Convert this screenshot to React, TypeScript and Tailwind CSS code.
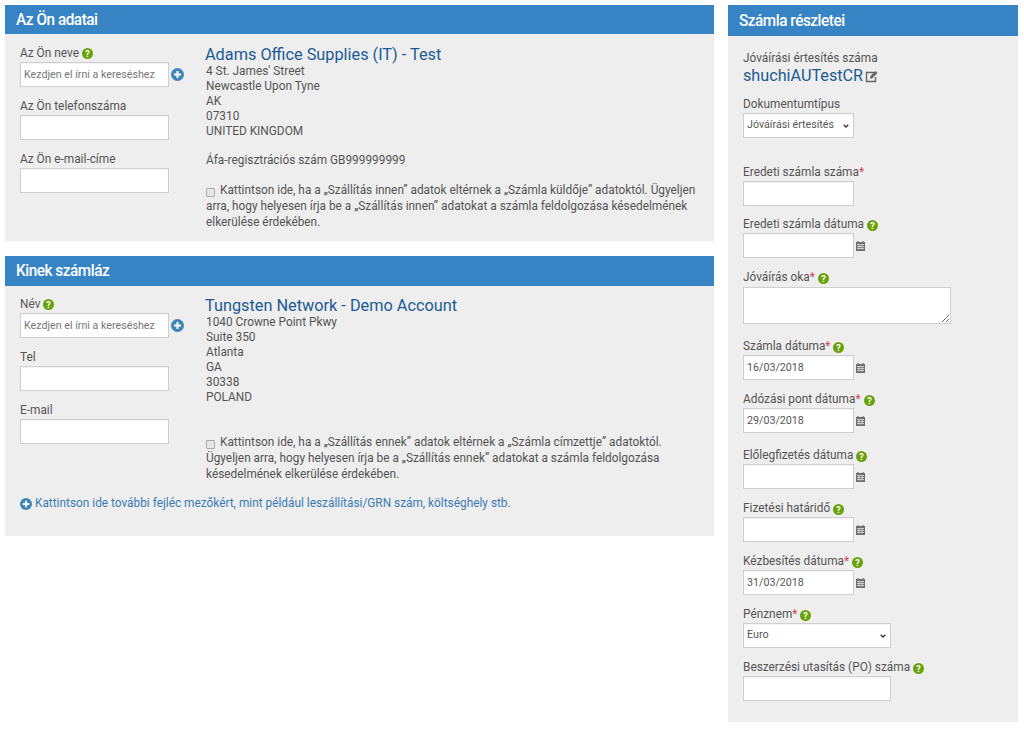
import React from "react";

const Help = ({ className = "" }: { className?: string }) => (
  <svg width="11" height="11" viewBox="0 0 11 11" className={`inline-block shrink-0 ${className}`}>
    <circle cx="5.5" cy="5.5" r="5.5" fill="#6aa20c" />
    <text x="5.5" y="8.800" textAnchor="middle" fontSize="9" fontWeight="700" fill="#fff" fontFamily="Roboto, sans-serif">?</text>
  </svg>
);

const Plus = ({ className = "" }: { className?: string }) => (
  <svg width="13" height="13" viewBox="0 0 13 13" className={`shrink-0 ${className}`}>
    <circle cx="6.500" cy="6.500" r="6.500" fill="#3f86b8" />
    <path d="M6.500 3v7M3 6.500h7" stroke="#fff" strokeWidth="2" />
  </svg>
);

const Cal = () => (
  <svg width="9" height="10" viewBox="0 0 9 10" className="shrink-0">
    <path d="M0 1h9v9H0z" fill="#707070" />
    <path d="M1 3.500h7M1 5.500h7M1 7.500h7M3 3.500v5M6 3.500v5" stroke="#ddd" strokeWidth=".8" />
    <path d="M2 0v2M7 0v2" stroke="#707070" strokeWidth="1.200" />
  </svg>
);

const Edit = () => (
  <svg width="13" height="13" viewBox="0 0 13 13" className="shrink-0 ml-[2px]">
    <path d="M9 2.500H1.500v9h9V7" fill="none" stroke="#666" strokeWidth="1.400" />
    <path d="M5 6.500 10.500 1l2 2L7 8.500H5z" fill="#666" />
  </svg>
);

const inputCls = "block h-[25px] bg-white border border-[#cfcfcf] shadow-[inset_0_1px_1px_rgba(0,0,0,0.05)] text-[10.7px] text-[#555] px-[3px] outline-none";

const Header = ({ children, h }: { children: React.ReactNode; h: string }) => (
  <div className={`${h} bg-[#3784c5] text-white text-[17px] font-medium pl-[11px] flex items-center tracking-[-0.5px]`}>
    <span className="origin-left scale-x-[0.9] whitespace-nowrap">{children}</span>
  </div>
);

const Star = () => <span className="text-[#d9434e]">*</span>;

const Check = () => (
  <input type="checkbox" readOnly className="appearance-none w-[9px] h-[9px] border border-[#aaa] bg-[#e6e6e6] rounded-[1px] mr-[5px] align-[-3px]" />
);

function Select({ value, w }: { value: string; w: string }) {
  return (
    <div className={`relative ${w}`}>
      <select className={`${inputCls} w-full appearance-none`} defaultValue={value}>
        <option value={value}>{value}</option>
      </select>
      <svg width="6" height="4" viewBox="0 0 6 4" className="absolute right-[5px] top-[11px]">
        <path d="M.7.7 3 3l2.300-2.300" fill="none" stroke="#333" strokeWidth="1.300" />
      </svg>
    </div>
  );
}

function LeftFields({ a, b, c }: { a: string; b: string; c: string }) {
  return (
    <div className="w-[200px] shrink-0 pl-[15px] leading-[15px]">
      <div className="h-[16px] flex items-center gap-[3px]">{a}<Help /></div>
      <div className="flex items-center mt-[1px]">
        <input readOnly placeholder="Kezdjen el írni a kereséshez" className={`${inputCls} w-[149px] placeholder:text-[#777]`} />
        <Plus className="ml-[2px]" />
      </div>
      <div className="mt-[11px] h-[16px] flex items-center">{b}</div>
      <input readOnly className={`${inputCls} w-[149px] mt-[1px]`} />
      <div className="mt-[11px] h-[16px] flex items-center">{c}</div>
      <input readOnly className={`${inputCls} w-[149px] mt-[1px]`} />
    </div>
  );
}

function Field({ label, star, help, value, cal, mt, w = "w-[111px]" }: { label: string; star?: boolean; help?: boolean; value?: string; cal?: boolean; mt: string; w?: string }) {
  return (
    <div className={mt}>
      <div className="h-[16px] flex items-center whitespace-nowrap">
        {label}{star && <Star />}{help && <Help className="ml-[3px]" />}
      </div>
      <div className="flex items-center gap-[2px]">
        <input readOnly value={value ?? ""} className={`${inputCls} ${w}`} />
        {cal && <Cal />}
      </div>
    </div>
  );
}

export default function App() {
  return (
    <div className="w-[1024px] h-[729px] bg-white flex items-start pt-[5px] pl-[5px] overflow-hidden font-['Roboto',sans-serif] text-[11.85px] text-[#555]">
      <div className="w-[709px] shrink-0">
        <Header h="h-[29px]">Az Ön adatai</Header>
        <section className="h-[207px] bg-[#eeeeee] flex pt-[11px]">
          <LeftFields a="Az Ön neve" b="Az Ön telefonszáma" c="Az Ön e-mail-címe" />
          <div className="w-[509px] pl-[1px] pr-[10px]">
            <h2 className="text-[16.3px] leading-[20px] text-[#1c5a94] ml-[-1px]">Adams Office Supplies (IT) - Test</h2>
            <div className="leading-[15px] mt-[-1px]">
              <div>4 St. James' Street</div>
              <div>Newcastle Upon Tyne</div>
              <div>AK</div>
              <div>07310</div>
              <div>UNITED KINGDOM</div>
              <div className="mt-[14px]">Áfa-regisztrációs szám GB999999999</div>
            </div>
            <p className="mt-[14px] leading-[16px]">
              <Check />
              Kattintson ide, ha a „Szállítás innen” adatok eltérnek a „Számla küldője” adatoktól. Ügyeljen arra, hogy helyesen írja be a „Szállítás innen” adatokat a számla feldolgozása késedelmének elkerülése érdekében.
            </p>
          </div>
        </section>
        <div className="h-[15px]" />
        <Header h="h-[30px]">Kinek számláz</Header>
        <section className="h-[250px] bg-[#eeeeee] pt-[10px]">
          <div className="flex">
            <LeftFields a="Név" b="Tel" c="E-mail" />
            <div className="w-[509px] pl-[1px] pr-[10px]">
              <h2 className="text-[16.3px] leading-[20px] text-[#1c5a94] ml-[-1px]">Tungsten Network - Demo Account</h2>
              <div className="leading-[15px] mt-[-1px]">
                <div>1040 Crowne Point Pkwy</div>
                <div>Suite 350</div>
                <div>Atlanta</div>
                <div>GA</div>
                <div>30338</div>
                <div>POLAND</div>
              </div>
              <p className="mt-[29px] leading-[16px]">
                <Check />
                Kattintson ide, ha a „Szállítás ennek” adatok eltérnek a „Számla címzettje” adatoktól. Ügyeljen arra, hogy helyesen írja be a „Szállítás ennek” adatokat a számla feldolgozása késedelmének elkerülése érdekében.
              </p>
            </div>
          </div>
          <div className="flex items-center gap-[3px] pl-[15px] mt-[13px] text-[#3b7bb3]">
            <Plus className="w-[12px] h-[12px]" />
            Kattintson ide további fejléc mezőkért, mint például leszállítási/GRN szám, költséghely stb.
          </div>
        </section>
      </div>
      <div className="w-[290px] ml-[14px] shrink-0">
        <Header h="h-[31px]">Számla részletei</Header>
        <aside className="h-[686px] bg-[#eeeeee] pl-[15px] pt-[15px]">
          <div className="h-[16px] flex items-center">Jóváírási értesítés száma</div>
          <div className="flex items-center h-[19px] text-[#1c5a94] text-[16.2px]">shuchiAUTestCR<Edit /></div>
          <div className="mt-[11px] h-[16px] flex items-center">Dokumentumtípus</div>
          <Select value="Jóváírási értesítés" w="w-[111px]" />
          <Field label="Eredeti számla száma" star mt="mt-[27px]" />
          <Field label="Eredeti számla dátuma" help cal mt="mt-[11px]" />
          <div className="mt-[12px]">
            <div className="h-[16px] flex items-center">Jóváírás oka<Star /><Help className="ml-[3px]" /></div>
            <textarea readOnly className="block w-[208px] h-[37px] mt-[1px] bg-white border border-[#cfcfcf] outline-none" />
          </div>
          <Field label="Számla dátuma" star help cal value="16/03/2018" mt="mt-[15px]" />
          <Field label="Adózási pont dátuma" star help cal value="29/03/2018" mt="mt-[12px]" />
          <Field label="Előlegfizetés dátuma" help cal mt="mt-[15px]" />
          <Field label="Fizetési határidő" help cal mt="mt-[12px]" />
          <Field label="Kézbesítés dátuma" star help cal value="31/03/2018" mt="mt-[12px]" />
          <div className="mt-[12px]">
            <div className="h-[16px] flex items-center">Pénznem<Star /><Help className="ml-[3px]" /></div>
            <Select value="Euro" w="w-[148px]" />
          </div>
          <Field label="Beszerzési utasítás (PO) száma" help w="w-[148px]" mt="mt-[12px]" />
        </aside>
      </div>
    </div>
  );
}
